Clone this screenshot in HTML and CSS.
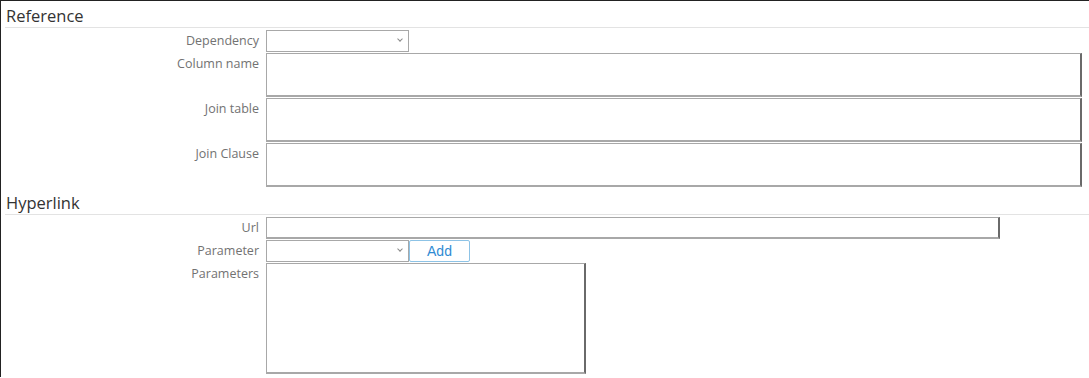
FILE: index.html
```html
<!DOCTYPE html>
<html lang="en">
<head>
    <meta charset="UTF-8">
    <title>Column settings</title>
    <link rel="stylesheet" href="styles.css">
</head>
<body>
    <div class="page">
        <h2 class="section-title">Reference</h2>
        <div class="form-grid">
            <label for="dependency">Dependency</label>
            <div><span class="combo-wrap"><select id="dependency" class="combo"><option></option></select></span></div>

            <label for="columnName">Column name</label>
            <div><textarea id="columnName" class="box wide"></textarea></div>

            <label for="joinTable">Join table</label>
            <div><textarea id="joinTable" class="box wide"></textarea></div>

            <label for="joinClause">Join Clause</label>
            <div><textarea id="joinClause" class="box wide"></textarea></div>
        </div>

        <h2 class="section-title">Hyperlink</h2>
        <div class="form-grid">
            <label for="url">Url</label>
            <div><input type="text" id="url" class="box url"></div>

            <label for="parameter">Parameter</label>
            <div class="inline">
                <span class="combo-wrap"><select id="parameter" class="combo"><option></option></select></span>
                <button type="button" class="add-btn">Add</button>
            </div>

            <label for="parameters">Parameters</label>
            <div><select id="parameters" class="box list" multiple></select></div>
        </div>
    </div>
</body>
</html>
```

FILE: styles.css
```css
html, body {
    margin: 0;
    background: #ffffff;
}
.page {
    font-family: 'Open Sans', sans-serif;
    border-top: 1px solid #222;
    border-left: 1px solid #222;
    min-height: 377px;
    box-sizing: border-box;
}
.section-title {
    margin: 0 0 2px 4px;
    padding: 3px 0 0 1px;
    font-size: 16.5px;
    font-weight: 400;
    color: #333;
    line-height: 23px;
    height: 23px;
    border-bottom: 1px solid #e3e3e3;
}
.form-grid + .section-title {
    margin-top: 1px;
}
.form-grid {
    display: grid;
    grid-template-columns: 258px 1fr;
    column-gap: 7px;
    row-gap: 1px;
}
.form-grid label {
    text-align: right;
    font-size: 12.5px;
    color: #727272;
    line-height: 18px;
    padding-top: 2px;
}
.box {
    box-sizing: border-box;
    display: block;
    margin: 0;
    background: #fff;
    border: 1px solid #a8a8a8;
    border-right: 2px solid #6a6a6a;
    border-bottom: 2px solid #a8a8a8;
    border-radius: 0;
    font-family: 'Open Sans', sans-serif;
    font-size: 12px;
    outline: none;
}
textarea.box {
    resize: none;
}
.wide {
    width: 816px;
    height: 44px;
}
.url {
    width: 734px;
    height: 22px;
}
.list {
    width: 320px;
    height: 111px;
}
.combo-wrap {
    position: relative;
    display: inline-block;
    vertical-align: top;
}
.combo-wrap::after {
    content: "";
    position: absolute;
    right: 7px;
    top: 7px;
    width: 3px;
    height: 3px;
    border-right: 1px solid #8a8a8a;
    border-bottom: 1px solid #8a8a8a;
    transform: rotate(45deg);
    pointer-events: none;
}
.combo {
    display: block;
    box-sizing: border-box;
    width: 143px;
    height: 22px;
    margin: 0;
    padding: 0 18px 0 3px;
    border: 1px solid #a8a8a8;
    border-radius: 0;
    background: #fff;
    font-family: 'Open Sans', sans-serif;
    font-size: 12px;
    color: #555;
    appearance: none;
    -webkit-appearance: none;
    outline: none;
}
.inline {
    display: flex;
    align-items: flex-start;
}
.add-btn {
    box-sizing: border-box;
    width: 61px;
    height: 22px;
    margin: 0;
    padding: 0 0 1px;
    background: #fff;
    border: 1px solid #8dc3e6;
    border-radius: 2px;
    color: #2f8bd3;
    font-family: 'Liberation Sans', Arial, sans-serif;
    font-size: 14px;
    cursor: pointer;
}
```
